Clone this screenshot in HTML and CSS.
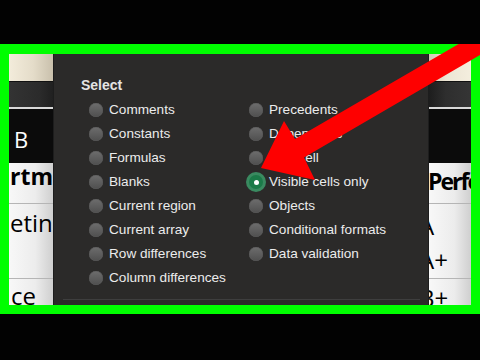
FILE: index.html
```html
<!DOCTYPE html>
<html lang="en">
<head>
<meta charset="utf-8">
<title>Go To Special - Visible cells only</title>
<link rel="stylesheet" href="styles.css">
</head>
<body>
<div class="page">
  <div class="bar"></div>
  <div class="frame">
    <div class="sheet sheet-left">
      <div class="hdr-cream"></div>
      <div class="hdr-dark"></div>
      <div class="hdr-col"><span class="col-letter">B</span></div>
      <div class="cell cell-1"><span class="txt bold t-rtm">rtm</span></div>
      <div class="cell cell-2"><span class="txt t-etin">etin</span></div>
      <div class="cell cell-3"><span class="txt t-ce">ce</span></div>
    </div>

    <div class="dialog">
      <div class="title">Select</div>
      <div class="options">
        <div class="opt"><span class="radio"></span><span>Comments</span></div>
        <div class="opt"><span class="radio"></span><span>Constants</span></div>
        <div class="opt"><span class="radio"></span><span>Formulas</span></div>
        <div class="opt"><span class="radio"></span><span>Blanks</span></div>
        <div class="opt"><span class="radio"></span><span>Current region</span></div>
        <div class="opt"><span class="radio"></span><span>Current array</span></div>
        <div class="opt"><span class="radio"></span><span>Row differences</span></div>
        <div class="opt"><span class="radio"></span><span>Column differences</span></div>
        <div class="opt"><span class="radio"></span><span>Precedents</span></div>
        <div class="opt"><span class="radio"></span><span>Dependents</span></div>
        <div class="opt"><span class="radio"></span><span>Last cell</span></div>
        <div class="opt"><span class="radio checked"></span><span>Visible cells only</span></div>
        <div class="opt"><span class="radio"></span><span>Objects</span></div>
        <div class="opt"><span class="radio"></span><span>Conditional formats</span></div>
        <div class="opt"><span class="radio"></span><span>Data validation</span></div>
      </div>
      <div class="sep"></div>
    </div>

    <div class="sheet sheet-right">
      <div class="hdr-cream"></div>
      <div class="hdr-dark"></div>
      <div class="hdr-col"></div>
      <div class="cell cell-1"><span class="txt bold t-perf">Perfo</span></div>
      <div class="cell cell-2">
        <span class="txt t-a1">A</span>
        <span class="txt t-a2">A+</span>
      </div>
      <div class="cell cell-3"><span class="txt t-b">B+</span></div>
    </div>

    <svg class="arrow" width="480" height="270" viewBox="0 44 480 270" aria-hidden="true">
      <polygon points="500,20 295,139 284,121 261,168 315,180 304,157.5 500,43.4" fill="#fe0000"/>
    </svg>
  </div>
  <div class="bar bar-bottom"></div>
</div>
</body>
</html>
```

FILE: styles.css
```css
* { box-sizing: border-box; }

html, body {
  margin: 0;
  padding: 0;
  background: #000;
}

.page {
  width: 480px;
  height: 360px;
  display: flex;
  flex-direction: column;
  background: #000;
  overflow: hidden;
}

.bar { height: 44px; background: #020202; }
.bar-bottom { height: 46px; }

.frame {
  position: relative;
  height: 270px;
  background: #00fe00;
  padding: 10px 9px 9px 9px;
  display: flex;
  overflow: hidden;
}

/* spreadsheet strips */
.sheet {
  display: flex;
  flex-direction: column;
  height: 251px;
  overflow: hidden;
  font-family: "Open Sans", "DejaVu Sans", sans-serif;
  color: #000;
}
.sheet-left { width: 44px; }
.sheet-right { width: 42px; }

.hdr-cream {
  height: 28px;
  border-bottom: 1px solid #111;
}
.sheet-left .hdr-cream { background: linear-gradient(to right, #f3ecdb, #e4dcc9 55%, #c9c0ac); }
.sheet-right .hdr-cream { background: linear-gradient(to right, #d2c9b5, #ece5d4 40%, #f4eede); }

.hdr-dark {
  height: 27px;
  border-bottom: 2px solid #d9d9d9;
}
.sheet-left .hdr-dark { background: linear-gradient(to right, #333, #2b2b2b 70%, #202020); }
.sheet-right .hdr-dark { background: linear-gradient(to right, #1d1d1d, #2e2e2e 40%, #353535); }

.hdr-col {
  height: 54px;
  background: #0b0b0b;
  padding: 19px 0 0 5px;
}
.col-letter {
  display: block;
  color: #fff;
  font-size: 22px;
  line-height: 22px;
}

.cell {
  background: linear-gradient(to right, #f8f8f8, #ececec 60%, #cfcfcf);
  white-space: nowrap;
  overflow: hidden;
}
.cell-1 { height: 41px; border-bottom: 1px solid #b5b5b5; }
.cell-2 { height: 75px; border-bottom: 1px solid #b5b5b5; }
.cell-3 { flex: 1; }

.txt {
  display: block;
  font-size: 24px;
  line-height: 24px;
}
.bold { font-weight: 700; font-size: 23px; line-height: 23px; }

.t-rtm { padding: 2px 0 0 1px; }
.t-etin { padding: 7px 0 0 1px; }
.t-ce { padding: 5px 0 0 2px; }

.t-perf { padding: 7px 0 0 0; margin-left: -1px; letter-spacing: -2px; }
.t-a1 { padding-top: 10px; margin-left: -10px; }
.t-a2 { padding-top: 10px; margin-left: -10px; }
.t-b { padding-top: 7px; margin-left: -10px; }

/* dialog */
.dialog {
  width: 376px;
  height: 251px;
  background: #2b2a29;
  border-left: 1px solid #1d1d1d;
  border-right: 1px solid #1d1d1d;
  display: flex;
  flex-direction: column;
  padding-top: 19px;
  font-family: "Liberation Sans", Arial, sans-serif;
  color: #ececec;
}

.title {
  margin-left: 27px;
  font-size: 14px;
  font-weight: 700;
  line-height: 24px;
  color: #e4e4e4;
}

.options {
  margin: 1px 0 0 35px;
  display: grid;
  grid-template-columns: 160px auto;
  grid-template-rows: repeat(8, 24px);
  grid-auto-flow: column;
}

.opt {
  display: flex;
  align-items: center;
  gap: 6px;
  font-size: 13.6px;
  line-height: 24px;
  white-space: nowrap;
}

.radio {
  width: 14px;
  height: 14px;
  border-radius: 50%;
  background: linear-gradient(to bottom, #6d6d6d, #4f4f4f);
  box-shadow: inset 0 0 0 0.5px #5a5a5a;
  flex: none;
}

.radio.checked {
  background: #1b7a48;
  box-shadow: 0 0 0 3px #3a8a60;
  display: flex;
  align-items: center;
  justify-content: center;
}
.radio.checked::after {
  content: "";
  width: 5px;
  height: 5px;
  border-radius: 50%;
  background: #fff;
}

.sep {
  margin: auto 8px 5px 9px;
  height: 1px;
  background: #3e3e3e;
}

.arrow {
  position: absolute;
  left: 0;
  top: 0;
}
```
